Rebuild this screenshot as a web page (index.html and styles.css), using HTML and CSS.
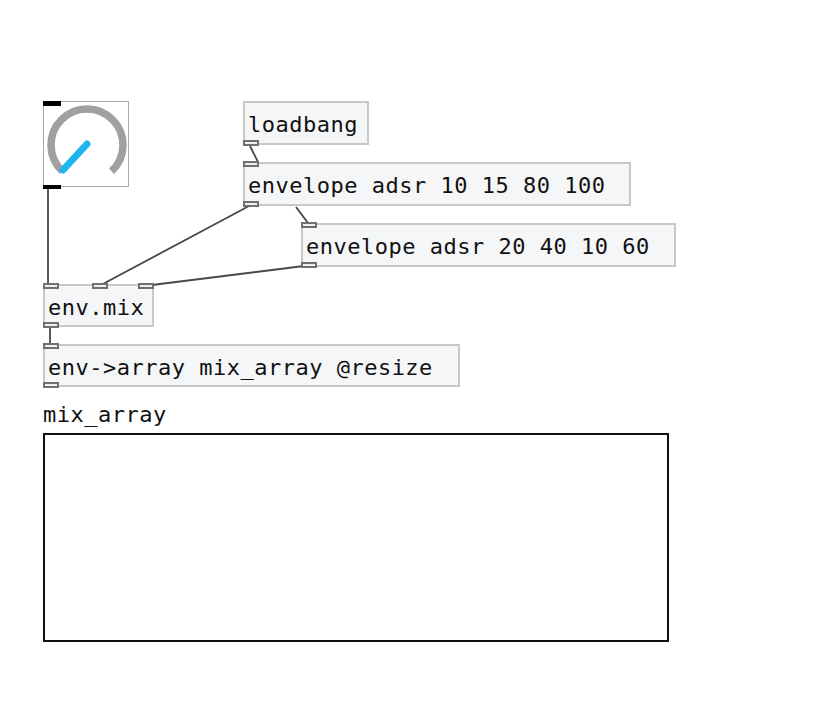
FILE: index.html
```html
<!DOCTYPE html>
<html>
<head>
<meta charset="utf-8">
<link rel="stylesheet" href="styles.css">
</head>
<body>
<div class="canvas">
  <svg class="wires" width="817" height="711" viewBox="0 0 817 711">
    <line x1="48" y1="188" x2="48" y2="285"/>
    <line x1="250" y1="146" x2="258" y2="162"/>
    <line x1="249" y1="206" x2="101" y2="285"/>
    <line x1="296" y1="207" x2="308" y2="223"/>
    <line x1="304" y1="266" x2="152" y2="285"/>
    <line x1="50" y1="327" x2="50" y2="345"/>
  </svg>

  <div class="knob">
    <svg width="86" height="86" viewBox="0 0 86 86">
      <path class="arc" d="M19.5 70.3 A36 36 0 1 1 68.5 70.3"/>
      <line class="needle" x1="20" y1="69" x2="44" y2="43"/>
    </svg>
    <span class="kin"></span>
    <span class="kout"></span>
  </div>

  <div class="obj n-loadbang">loadbang<span class="port out-l"></span></div>
  <div class="obj n-env1"><span class="port in-l"></span>envelope adsr 10 15 80 100<span class="port out-l"></span></div>
  <div class="obj n-env2"><span class="port in-l"></span>envelope adsr 20 40 10 60<span class="port out-l"></span></div>
  <div class="obj n-mix"><span class="port in-l"></span><span class="port in-m"></span><span class="port in-r"></span>env.mix<span class="port out-l"></span></div>
  <div class="obj n-arr"><span class="port in-l"></span>env-&gt;array mix_array @resize<span class="port out-l"></span></div>

  <div class="label">mix_array</div>
  <div class="array"></div>
</div>
</body>
</html>
```

FILE: styles.css
```css
html, body {
  margin: 0;
  padding: 0;
  background: #ffffff;
}
.canvas {
  position: relative;
  width: 817px;
  height: 711px;
  overflow: hidden;
  font-family: "DejaVu Sans Mono", "Liberation Mono", monospace;
  font-size: 22px;
  letter-spacing: 0.5px;
  color: #111;
}
.wires {
  position: absolute;
  left: 0;
  top: 0;
}
.wires line {
  stroke: #474747;
  stroke-width: 1.8;
}
.knob {
  position: absolute;
  left: 43px;
  top: 101px;
  width: 86px;
  height: 86px;
  box-sizing: border-box;
  border: 1.5px solid #a8a8a8;
  background: #fff;
}
.knob svg {
  position: absolute;
  left: -1.5px;
  top: -1.5px;
}
.knob .arc {
  fill: none;
  stroke: #a0a0a0;
  stroke-width: 7.5;
}
.knob .needle {
  stroke: #1cb5ee;
  stroke-width: 7;
  stroke-linecap: round;
}
.kin, .kout {
  position: absolute;
  left: -1.5px;
  width: 18px;
  height: 4.5px;
  background: #000;
}
.kin { top: -1px; }
.kout { bottom: -3px; }
.obj {
  position: absolute;
  box-sizing: border-box;
  height: 44px;
  border: 2px solid #c8c8c8;
  background: #f5f6f8;
  padding: 2px 0 0 3px;
  line-height: 40px;
  white-space: nowrap;
}
.n-loadbang { left: 243px; top: 101px; width: 126px; }
.n-env1 { left: 243px; top: 162px; width: 388px; }
.n-env2 { left: 301px; top: 223px; width: 375px; }
.n-mix { left: 43px; top: 284px; width: 111px; height: 43px; }
.n-arr { left: 43px; top: 344px; width: 417px; height: 43px; }
.port {
  position: absolute;
  box-sizing: border-box;
  width: 16px;
  height: 6px;
  border: 2px solid #707070;
  background: #eef0f2;
}
.in-l { left: -2px; top: -3px; }
.in-m { left: 47px; top: -3px; }
.in-r { right: -2px; top: -3px; }
.out-l { left: -2px; bottom: -3px; }
.label {
  position: absolute;
  left: 43px;
  top: 401px;
  line-height: 28px;
}
.array {
  position: absolute;
  left: 43px;
  top: 433px;
  width: 626px;
  height: 209px;
  box-sizing: border-box;
  border: 2px solid #111;
  background: #fff;
}
```
